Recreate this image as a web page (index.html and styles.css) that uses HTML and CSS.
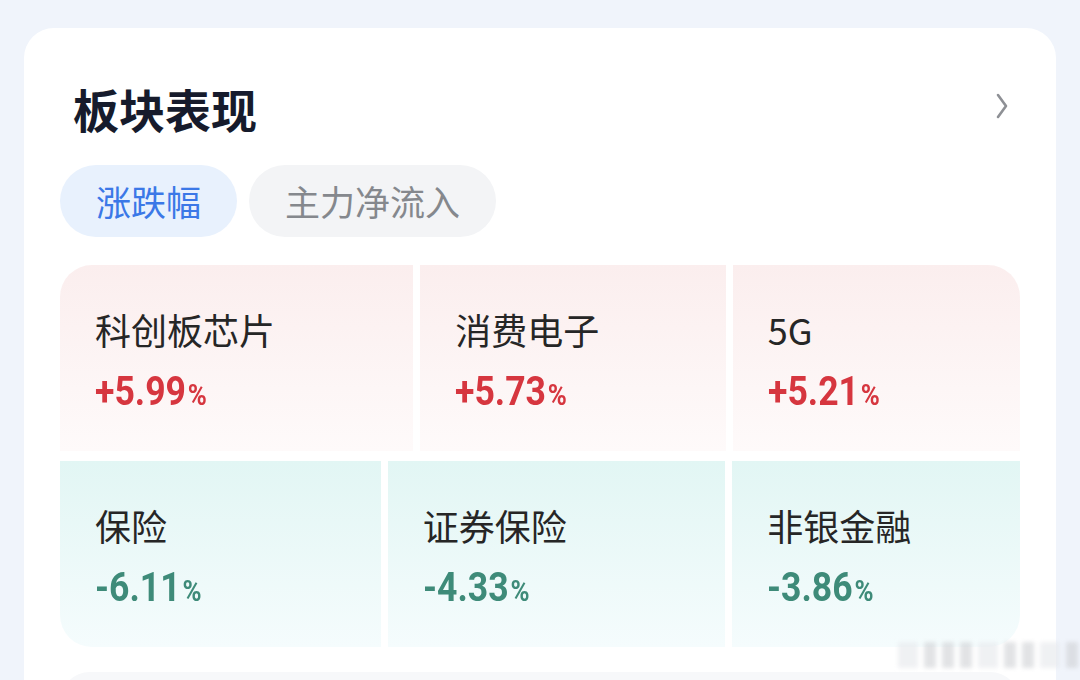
FILE: index.html
```html
<!DOCTYPE html>
<html lang="zh-CN">
  <head>
    <meta charset="UTF-8" />
    <meta name="viewport" content="width=device-width, initial-scale=1.0" />
    <title>板块表现</title>
    <link rel="stylesheet" href="styles.css">
  </head>
  <body>
    <div class="card">
      <!-- Header -->
      <div class="card-head">
        <h2>板块表现</h2>
        <svg class="more" width="16" height="28" viewBox="0 0 16 28">
          <polyline points="4,3 12,14 4,25" fill="none" stroke="#8e9095" stroke-width="2.6" stroke-linecap="round" stroke-linejoin="round" />
        </svg>
      </div>

      <!-- Tabs -->
      <div class="tabs">
        <span class="tab active">涨跌幅</span>
        <span class="tab">主力净流入</span>
      </div>

      <!-- Sector tiles -->
      <div class="tiles">
        <div class="tile-row up">
          <div class="tile">
            <div class="name">科创板芯片</div>
            <div class="pct">+5.99<small>%</small></div>
          </div>
          <div class="tile">
            <div class="name">消费电子</div>
            <div class="pct">+5.73<small>%</small></div>
          </div>
          <div class="tile">
            <div class="name">5G</div>
            <div class="pct">+5.21<small>%</small></div>
          </div>
        </div>
        <div class="tile-row down">
          <div class="tile">
            <div class="name">保险</div>
            <div class="pct">-6.11<small>%</small></div>
          </div>
          <div class="tile">
            <div class="name">证券保险</div>
            <div class="pct">-4.33<small>%</small></div>
          </div>
          <div class="tile">
            <div class="name">非银金融</div>
            <div class="pct">-3.86<small>%</small></div>
          </div>
        </div>
      </div>

      <div class="next-block"></div>

      <div class="mark">
        <i class="w"></i><i></i><i></i><i></i><i class="w"></i><i></i><i></i><i class="w"></i><i></i>
      </div>
    </div>
  </body>
</html>
```

FILE: styles.css
```css
body {
  margin: 0;
  background: #f0f4fb;
  font-family: "Noto Sans CJK SC", "Noto Sans", sans-serif;
  overflow: hidden;
}
.card {
  position: relative;
  margin: 28px 24px 0;
  padding: 52px 36px 40px;
  background: #fff;
  border-radius: 30px;
  height: 700px;
  box-sizing: border-box;
}
.card-head {
  display: flex;
  justify-content: space-between;
  align-items: center;
  padding: 0 10px 0 13px;
}
.card-head h2 {
  margin: 0;
  font-size: 46px;
  line-height: 56px;
  font-weight: 700;
  color: #161b2c;
}
.more {
  margin-top: -4px;
}
.tabs {
  display: flex;
  gap: 12px;
  margin-top: 29px;
}
.tab {
  height: 72px;
  line-height: 72px;
  padding: 0 36px;
  border-radius: 36px;
  font-size: 35px;
  background: #f3f4f6;
  color: #85888d;
}
.tab.active {
  background: #e8f1fd;
  color: #3b78e7;
}
.tiles {
  display: flex;
  flex-direction: column;
  gap: 10px;
  margin-top: 28px;
  border-radius: 32px;
  overflow: hidden;
}
.tile-row {
  display: grid;
  gap: 7px;
  height: 186px;
}
.tile-row.up {
  grid-template-columns: 353fr 305fr 287fr;
}
.tile-row.down {
  grid-template-columns: 321fr 338fr 288fr;
}
.tile {
  padding: 42px 35px 0;
}
.up .tile {
  background: linear-gradient(#fbeeee, #fefafa);
}
.down .tile {
  background: linear-gradient(#e2f6f4, #f5fcfd);
}
.name {
  font-size: 36px;
  line-height: 44px;
  color: #262626;
}
/* narrow bold figures */
.pct {
  display: inline-block;
  margin-top: 19px;
  font-family: Roboto, "Liberation Sans", sans-serif;
  font-size: 40px;
  line-height: 44px;
  font-weight: 700;
  transform: scaleX(0.89);
  transform-origin: left center;
}
.pct small {
  font-size: 29px;
  margin-left: 2px;
}
.up .pct {
  color: #d6363f;
}
.down .pct {
  color: #3e8b79;
}
.next-block {
  margin-top: 25px;
  height: 80px;
  border-radius: 30px;
  background: #f7f8fa;
}
.mark {
  position: absolute;
  right: -22px;
  top: 614px;
  display: flex;
  gap: 6px;
  align-items: flex-end;
  filter: blur(2px);
  opacity: 0.6;
}
.mark i {
  width: 12px;
  height: 26px;
  background: #cfd1d5;
}
.mark i.w {
  width: 20px;
  background: #e6e8ec;
}
```
